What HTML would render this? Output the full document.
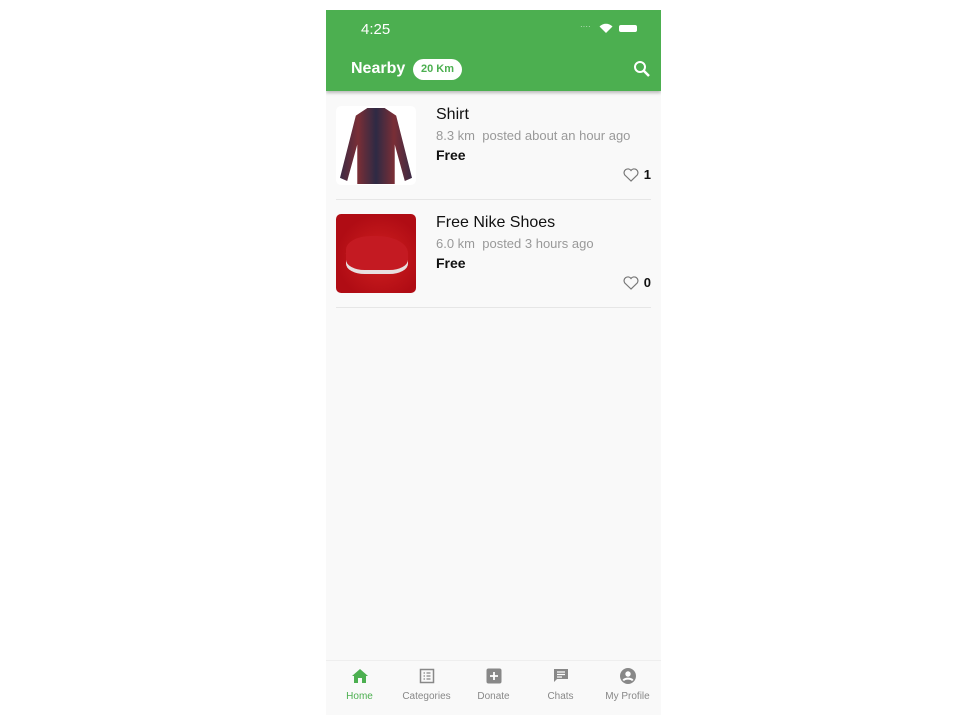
<!DOCTYPE html><html><head><style>
body{margin:0;background:#fff;font-family:"Liberation Sans",sans-serif;}
.ph{position:absolute;left:326px;top:10px;width:335px;height:705px;background:#f9f9f9;overflow:hidden}
.hdr{position:absolute;left:0;top:0;width:335px;height:81px;background:#4caf50;box-shadow:0 2px 3px rgba(0,0,0,.25)}
.t{position:absolute;color:#fff}
.item{position:absolute;left:10px;width:315px;height:103px;border-bottom:1px solid #e6e6e6}
.img{position:absolute;left:0;top:10px;width:80px;height:79px;border-radius:5px;overflow:hidden}
.nm{position:absolute;left:100px;top:10px;font-size:16px;color:#111}
.sub{position:absolute;left:100px;top:32px;font-size:13px;color:#999}
.fr{position:absolute;left:100px;top:51px;font-size:14px;font-weight:bold;color:#111}
.lk{position:absolute;right:0;top:71px;font-size:13px;font-weight:bold;color:#111;display:flex;align-items:center;gap:5px}
.tab{position:absolute;left:0;top:650px;width:335px;height:55px;background:#f9f9f9;border-top:1px solid #eee}
.ti{position:absolute;top:0;width:67px;text-align:center;font-size:10px;color:#888}
.ti svg{display:block;margin:7px auto 7px;height:16px}
</style></head><body><div class="ph">
<div class="hdr">
<div class="t" style="left:35px;top:11px;font-size:15px">4:25</div>
<div class="t" style="left:254px;top:12px;font-size:8px;opacity:.7">····</div>
<svg style="position:absolute;left:273px;top:13px" width="14" height="11" viewBox="0 0 14 11"><path d="M7 10L0.5 3.5A9 9 0 0 1 13.5 3.5Z" fill="#fff"/></svg>
<div style="position:absolute;left:293px;top:15px;width:18px;height:7px;background:#fff;border-radius:2px"></div>
<div class="t" style="left:25px;top:50px;font-size:16px;font-weight:bold">Nearby</div>
<div style="position:absolute;left:87px;top:49px;width:49px;height:21px;background:#fff;border-radius:11px;color:#4caf50;font-size:11px;font-weight:bold;text-align:center;line-height:21px">20 Km</div>
<svg style="position:absolute;left:307px;top:50px" width="18" height="18" viewBox="0 0 18 18"><circle cx="7" cy="7" r="5" stroke="#fff" stroke-width="2" fill="none"/><path d="M10.5 10.5L16 16" stroke="#fff" stroke-width="2.5"/></svg>
</div>
<div class="item" style="top:86px">
<div class="img" style="background:#fff"><div style="position:absolute;left:4px;top:2px;width:72px;height:76px;background:linear-gradient(90deg,#3a2a44,#7a2e36,#2e2a44,#7a2e36,#3a2a44);clip-path:polygon(38% 0,62% 0,78% 10%,100% 92%,90% 96%,76% 48%,76% 100%,24% 100%,24% 48%,10% 96%,0 92%,22% 10%)"></div></div>
<div class="nm">Shirt</div><div class="sub">8.3 km&nbsp; posted about an hour ago</div><div class="fr">Free</div>
<div class="lk"><svg width="16" height="14" viewBox="0 0 16 14"><path d="M8 13L1.8 7A3.6 3.6 0 0 1 8 2.5A3.6 3.6 0 0 1 14.2 7Z" fill="none" stroke="#777" stroke-width="1.2"/></svg>1</div>
</div>
<div class="item" style="top:194px">
<div class="img" style="background:radial-gradient(ellipse at 55% 55%,#d02020,#b00c14 70%)"><div style="position:absolute;left:10px;top:22px;width:62px;height:34px;background:#c41a22;border-radius:40% 50% 30% 30%;box-shadow:0 4px 0 #e8e0e0"></div></div>
<div class="nm">Free Nike Shoes</div><div class="sub">6.0 km&nbsp; posted 3 hours ago</div><div class="fr">Free</div>
<div class="lk"><svg width="16" height="14" viewBox="0 0 16 14"><path d="M8 13L1.8 7A3.6 3.6 0 0 1 8 2.5A3.6 3.6 0 0 1 14.2 7Z" fill="none" stroke="#777" stroke-width="1.2"/></svg>0</div>
</div>
<div class="tab">
<div class="ti" style="left:0;color:#4caf50"><svg width="16" height="16" viewBox="0 0 16 16"><path d="M8 1L0 8H2V15H6V10H10V15H14V8H16Z" fill="#4caf50"/></svg>Home</div>
<div class="ti" style="left:67px"><svg width="16" height="16" viewBox="0 0 16 16"><rect x="1.5" y="1.5" width="13" height="13" fill="none" stroke="#888" stroke-width="1.5"/><path d="M4.5 5h1.5M7.5 5h4M4.5 8h1.5M7.5 8h4M4.5 11h1.5M7.5 11h4" stroke="#888" stroke-width="1.3"/></svg>Categories</div>
<div class="ti" style="left:134px"><svg width="16" height="16" viewBox="0 0 16 16"><rect x="0.5" y="0.5" width="15" height="15" rx="2" fill="#888"/><path d="M8 4v8M4 8h8" stroke="#fff" stroke-width="1.8"/></svg>Donate</div>
<div class="ti" style="left:201px"><svg width="16" height="16" viewBox="0 0 16 16"><path d="M1 1h14v10H4L1 14Z" fill="#888"/><path d="M4 4h8M4 6.5h8M4 9h5" stroke="#fff" stroke-width="1.2"/></svg>Chats</div>
<div class="ti" style="left:268px"><svg width="16" height="16" viewBox="0 0 16 16"><circle cx="8" cy="8" r="8" fill="#888"/><circle cx="8" cy="6" r="2.7" fill="#fff"/><path d="M3.3 12.5C5 10 11 10 12.7 12.5" stroke="#fff" stroke-width="2" fill="none"/></svg>My Profile</div>
</div>
</div></body></html>
